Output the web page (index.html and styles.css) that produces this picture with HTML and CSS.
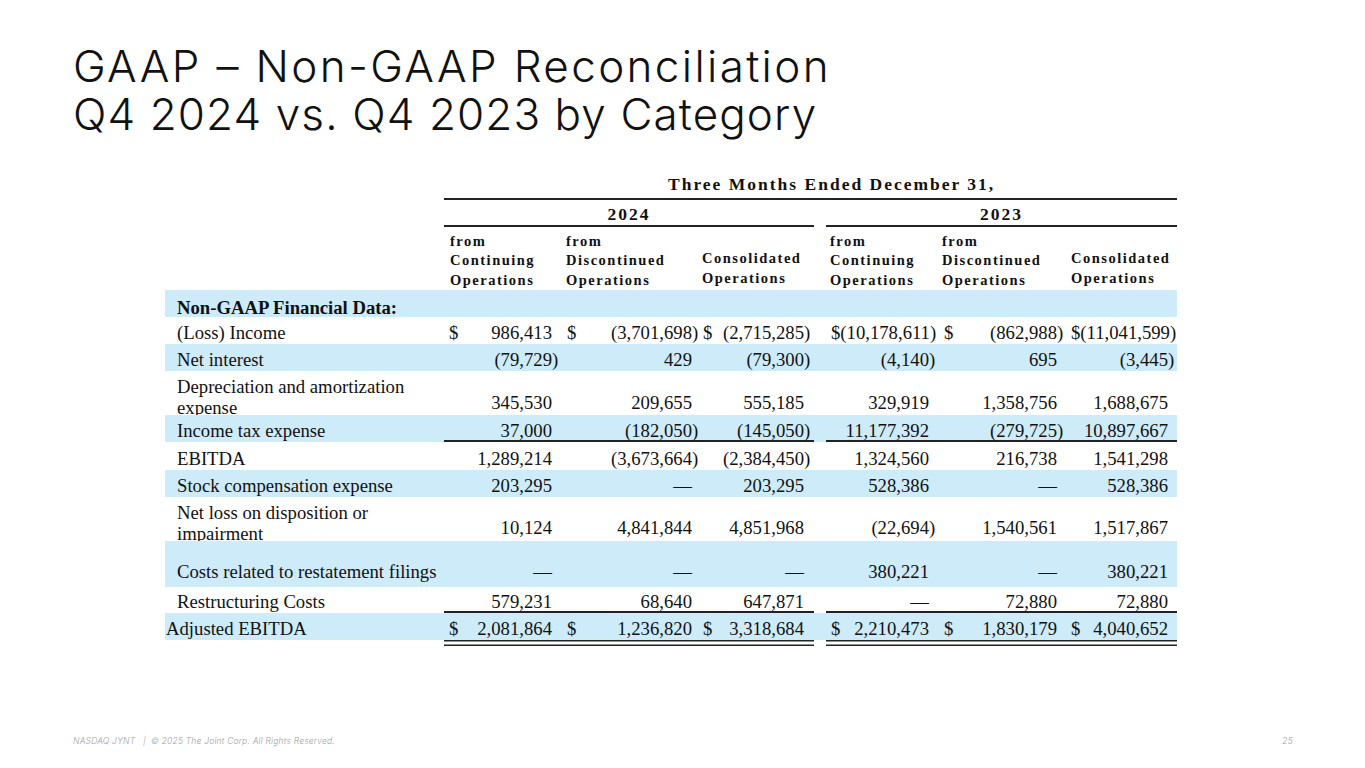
FILE: index.html
```html
<!DOCTYPE html>
<html lang="en">
<head>
<meta charset="utf-8">
<title>GAAP – Non-GAAP Reconciliation</title>
<link rel="stylesheet" href="styles.css">
</head>
<body>
<div class="slide">
  <h1 class="title"><span class="t1">GAAP – Non-GAAP Reconciliation</span><span class="t2">Q4 2024 vs. Q4 2023 by Category</span></h1>

  <table class="recon">
    <colgroup>
      <col class="w-label"><col class="w-c1"><col class="w-c2"><col class="w-c3"><col class="w-gap"><col class="w-c4"><col class="w-c5"><col class="w-c6">
    </colgroup>
    <thead>
      <tr class="hp">
        <th class="l"></th>
        <th colspan="7" class="period">Three Months Ended December 31,</th>
      </tr>
      <tr class="hy">
        <th class="l"></th>
        <th colspan="3" class="year">2024</th>
        <th class="g"></th>
        <th colspan="3" class="year">2023</th>
      </tr>
      <tr class="hc">
        <th class="l"></th>
        <th class="ch">from<br>Continuing<br>Operations</th>
        <th class="ch">from<br>Discontinued<br>Operations</th>
        <th class="ch cons">Consolidated<br>Operations</th>
        <th class="g"></th>
        <th class="ch">from<br>Continuing<br>Operations</th>
        <th class="ch">from<br>Discontinued<br>Operations</th>
        <th class="ch cons">Consolidated<br>Operations</th>
      </tr>
    </thead>
    <tbody>
      <tr class="b r-sec">
        <td class="l sec">Non-GAAP Financial Data:</td>
        <td></td><td></td><td></td><td class="g"></td><td></td><td></td><td></td>
      </tr>
      <tr class="r27">
        <td class="l">(Loss) Income</td>
        <td><span class="cur">$</span>986,413</td>
        <td><span class="cur">$</span><span class="neg">(3,701,698)</span></td>
        <td><span class="cur">$</span><span class="neg">(2,715,285)</span></td>
        <td class="g"></td>
        <td>$<span class="neg">(10,178,611)</span></td>
        <td><span class="cur">$</span><span class="neg">(862,988)</span></td>
        <td>$<span class="neg">(11,041,599)</span></td>
      </tr>
      <tr class="b r27">
        <td class="l">Net interest</td>
        <td><span class="neg">(79,729)</span></td>
        <td>429</td>
        <td><span class="neg">(79,300)</span></td>
        <td class="g"></td>
        <td><span class="neg">(4,140)</span></td>
        <td>695</td>
        <td><span class="neg">(3,445)</span></td>
      </tr>
      <tr class="r44 pb3">
        <td class="l two"><div class="clip">Depreciation and amortization<br>expense</div></td>
        <td>345,530</td>
        <td>209,655</td>
        <td>555,185</td>
        <td class="g"></td>
        <td>329,919</td>
        <td>1,358,756</td>
        <td>1,688,675</td>
      </tr>
      <tr class="b r27 ul">
        <td class="l">Income tax expense</td>
        <td>37,000</td>
        <td><span class="neg">(182,050)</span></td>
        <td><span class="neg">(145,050)</span></td>
        <td class="g"></td>
        <td>11,177,392</td>
        <td><span class="neg">(279,725)</span></td>
        <td>10,897,667</td>
      </tr>
      <tr class="r28">
        <td class="l">EBITDA</td>
        <td>1,289,214</td>
        <td><span class="neg">(3,673,664)</span></td>
        <td><span class="neg">(2,384,450)</span></td>
        <td class="g"></td>
        <td>1,324,560</td>
        <td>216,738</td>
        <td>1,541,298</td>
      </tr>
      <tr class="b r27">
        <td class="l">Stock compensation expense</td>
        <td>203,295</td>
        <td>—</td>
        <td>203,295</td>
        <td class="g"></td>
        <td>528,386</td>
        <td>—</td>
        <td>528,386</td>
      </tr>
      <tr class="r44 pb4">
        <td class="l two"><div class="clip">Net loss on disposition or<br>impairment</div></td>
        <td>10,124</td>
        <td>4,841,844</td>
        <td>4,851,968</td>
        <td class="g"></td>
        <td><span class="neg">(22,694)</span></td>
        <td>1,540,561</td>
        <td>1,517,867</td>
      </tr>
      <tr class="b r46">
        <td class="l">Costs related to restatement filings</td>
        <td>—</td>
        <td>—</td>
        <td>—</td>
        <td class="g"></td>
        <td>380,221</td>
        <td>—</td>
        <td>380,221</td>
      </tr>
      <tr class="r26 ul">
        <td class="l">Restructuring Costs</td>
        <td>579,231</td>
        <td>68,640</td>
        <td>647,871</td>
        <td class="g"></td>
        <td>—</td>
        <td>72,880</td>
        <td>72,880</td>
      </tr>
      <tr class="b r27">
        <td class="l total">Adjusted EBITDA</td>
        <td><span class="cur">$</span>2,081,864</td>
        <td><span class="cur">$</span>1,236,820</td>
        <td><span class="cur">$</span>3,318,684</td>
        <td class="g"></td>
        <td><span class="cur">$</span>2,210,473</td>
        <td><span class="cur">$</span>1,830,179</td>
        <td><span class="cur">$</span>4,040,652</td>
      </tr>
      <tr class="dbl">
        <td class="l"></td><td></td><td></td><td></td><td class="g"></td><td></td><td></td><td></td>
      </tr>
    </tbody>
  </table>

  <footer class="foot">
    <span class="legal">NASDAQ JYNT   |  © 2025 The Joint Corp. All Rights Reserved.</span>
    <span class="pg">25</span>
  </footer>
</div>
</body>
</html>
```

FILE: styles.css
```css
* { box-sizing: border-box; }

html, body {
  margin: 0;
  padding: 0;
  background: #ffffff;
}

body {
  font-family: "Liberation Serif", "Times New Roman", serif;
  color: #111111;
}

.slide {
  width: 1365px;
  height: 768px;
  display: flex;
  flex-direction: column;
  align-items: flex-start;
  padding: 42px 72px 0 73px;
  overflow: hidden;
}

.title {
  margin: 0;
  display: flex;
  flex-direction: column;
  font-family: Inter, "Noto Sans", sans-serif;
  font-weight: 350;
  font-size: 44px;
  line-height: 48px;
  color: #111111;
}
.t1 { display: block; height: 48px; letter-spacing: 2.35px; }
.t2 { display: block; height: 48px; letter-spacing: 1.1px; }

/* ---------- reconciliation table ---------- */
.recon {
  margin: 34px 0 0 92px;
  border-collapse: separate;
  border-spacing: 0;
  table-layout: fixed;
  width: 1012px;
  font-size: 18.7px;
  line-height: 19px;
  color: #111111;
}

.w-label { width: 279px; }
.w-c1 { width: 116px; }
.w-c2 { width: 138px; }
.w-c3 { width: 116px; }
.w-gap { width: 12px; }
.w-c4 { width: 111px; }
.w-c5 { width: 128px; }
.w-c6 { width: 112px; }

.recon th {
  font-weight: 700;
  padding: 0;
  vertical-align: bottom;
}

.hp { height: 28px; }
.hy { height: 27px; }
.hc { height: 63px; }

.period {
  text-align: left;
  padding: 0 0 6px 224px !important;
  font-size: 17.5px;
  line-height: 20px;
  letter-spacing: 2px;
  white-space: nowrap;
  box-shadow: inset 0 -2px 0 #222222;
}

.year {
  text-align: center;
  padding: 0 0 3px 0 !important;
  font-size: 17.5px;
  line-height: 20px;
  letter-spacing: 2px;
  box-shadow: inset 0 -2px 0 #222222;
}

.ch {
  text-align: left;
  font-size: 14.5px;
  line-height: 19.5px;
  letter-spacing: 1.5px;
  white-space: nowrap;
}
.hc .ch:nth-child(2) { padding-left: 6px; }
.hc .ch:nth-child(3) { padding-left: 6px; }
.hc .ch:nth-child(4) { padding-left: 4px; }
.hc .ch:nth-child(6) { padding-left: 4px; }
.hc .ch:nth-child(7) { padding-left: 5px; }
.hc .ch:nth-child(8) { padding-left: 6px; }
.ch.cons { padding-bottom: 2px; }

/* body cells */
.recon td {
  text-align: right;
  white-space: nowrap;
  vertical-align: bottom;
  padding-top: 0;
  padding-bottom: 2px;
}

.recon tbody td:nth-child(2) { padding-left: 5px; padding-right: 8px; }
.recon tbody td:nth-child(3) { padding-left: 7px; padding-right: 6px; }
.recon tbody td:nth-child(4) { padding-left: 5px; padding-right: 10px; }
.recon tbody td:nth-child(6) { padding-left: 5px; padding-right: 8px; }
.recon tbody td:nth-child(7) { padding-left: 7px; padding-right: 8px; }
.recon tbody td:nth-child(8) { padding-left: 6px; padding-right: 9px; }

.recon td.l {
  text-align: left;
  padding-left: 12px;
  padding-right: 0;
}
.recon td.g { padding: 0; }

.recon td.sec { font-weight: 700; }
.recon td.total { padding-left: 1px; }

.cur { float: left; }
.neg { margin-right: -0.333em; }

/* row heights */
.r-sec { height: 27px; }
.r-sec td { padding-bottom: 0; }
.r26 { height: 26px; }
.r27 { height: 27px; }
.r28 { height: 28px; }
.r44 { height: 44px; }
.r46 { height: 46px; }
.r46 td { padding-bottom: 6px; }
.pb3 td { padding-bottom: 3px; }
.pb4 td { padding-bottom: 4px; }

.recon td.two {
  vertical-align: top;
  padding: 0 0 0 12px;
}
.clip {
  height: 44px;
  overflow: hidden;
  padding-top: 6px;
  line-height: 20.5px;
}

/* banding */
.b td { background: #cdebf9; }

/* single rules under a row of figures */
.ul td:not(.l):not(.g) { box-shadow: inset 0 -2px 0 #222222; }

/* double rule under the total */
.dbl { height: 6px; }
.dbl td {
  padding: 0 !important;
  font-size: 0;
  line-height: 0;
}
.dbl td:not(.l):not(.g) {
  box-shadow: inset 0 1.5px 0 #222222, inset 0 -1.5px 0 #222222;
}

/* ---------- footer ---------- */
.foot {
  margin-top: auto;
  align-self: stretch;
  display: flex;
  justify-content: space-between;
  align-items: baseline;
  padding-bottom: 22px;
  font-family: Inter, "Noto Sans", sans-serif;
  font-style: italic;
  font-weight: 300;
  font-size: 8.5px;
  line-height: 10px;
  letter-spacing: 0.2px;
  color: #a0a0a0;
}
.legal { white-space: pre; }
```
